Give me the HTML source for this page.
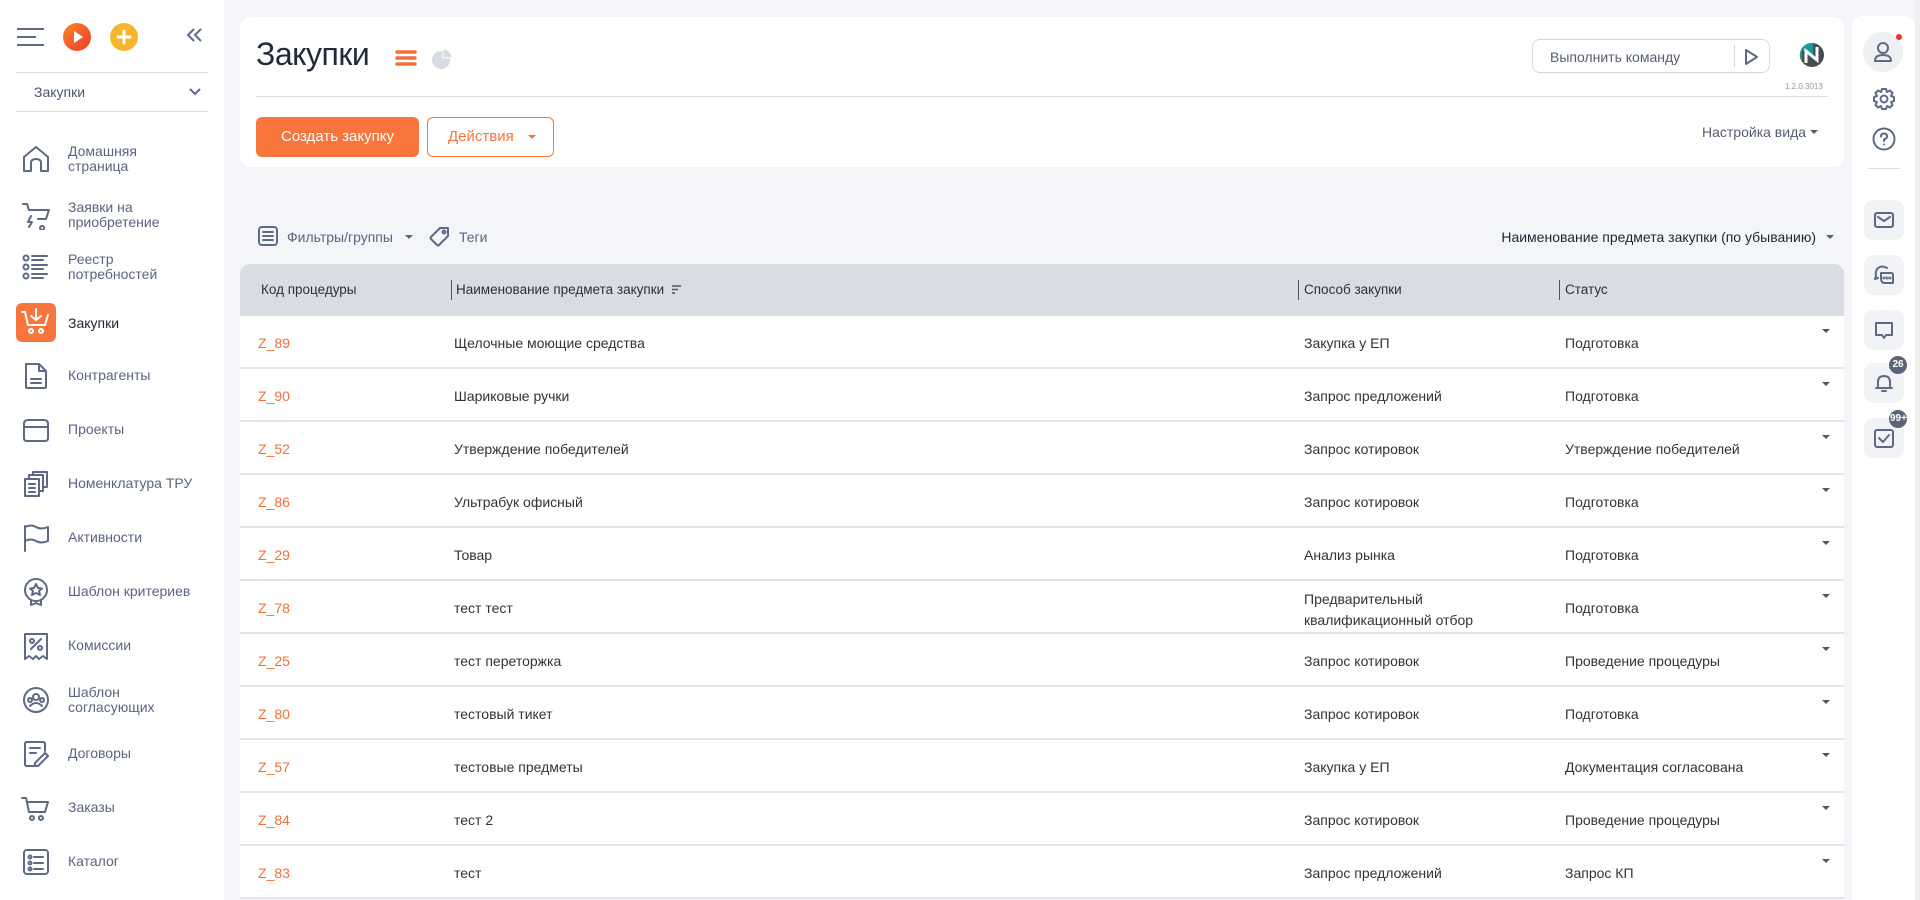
<!DOCTYPE html>
<html><head><meta charset="utf-8"><style>
*{box-sizing:border-box;margin:0;padding:0}
body{width:1920px;height:900px;overflow:hidden;background:#f4f5f9;font-family:"Liberation Sans","DejaVu Sans",sans-serif;position:relative;color:#333}
.abs{position:absolute}
#side{left:0;top:0;width:224px;height:900px;background:#fff}
.mi{position:absolute;left:0;width:224px;height:50px}
.mi svg{position:absolute;left:21px;top:10px}
.mi span{position:absolute;left:68px;font-size:14px;color:#5a6480;line-height:15px}
.ic{stroke:#5e6a85;stroke-width:2;fill:none;stroke-linecap:round;stroke-linejoin:round}
#card{left:240px;top:17px;width:1604px;height:150px;background:#fff;border-radius:10px}
.row{position:absolute;left:240px;width:1604px;height:53px;background:#fff;border-bottom:2px solid #e3e5ea;font-size:14px;color:#333}
.row div{position:absolute;top:19px}
.c1{left:18px;color:#f36f3a}.c2{left:214px}.c3{left:1064px}.c4{left:1325px}
.row .ar{left:1582px;top:13px;width:0;height:0;border-left:4px solid transparent;border-right:4px solid transparent;border-top:4px solid #555}
.rb{position:absolute;left:1864px;width:40px;height:40px;background:#f2f3f7;border-radius:10px}
.rb svg{position:absolute;left:10px;top:10px}
</style></head><body>
<div id="side" class="abs">
 <svg class="abs" style="left:16px;top:27px" width="30" height="20"><path d="M1 2H28M1 10H20M1 18H28" stroke="#5e6a85" stroke-width="2"/></svg>
 <svg class="abs" style="left:63px;top:23px" width="28" height="28"><defs><linearGradient id="g1" x1="0" y1="0" x2="1" y2="1"><stop offset="0" stop-color="#f9852a"/><stop offset="1" stop-color="#ef3b2c"/></linearGradient></defs><circle cx="14" cy="14" r="14" fill="url(#g1)"/><path d="M11 8L20 14L11 20Z" fill="#fff"/></svg>
 <svg class="abs" style="left:110px;top:23px" width="28" height="28"><circle cx="14" cy="14" r="14" fill="#f6b52d"/><path d="M14 8V20M8 14H20" stroke="#fff" stroke-width="3" stroke-linecap="round"/></svg>
 <svg class="abs" style="left:185px;top:27px" width="18" height="16"><path d="M9 2L3 8L9 14M16 2L10 8L16 14" stroke="#5e6a85" stroke-width="2" fill="none"/></svg>
 <div class="abs" style="left:16px;top:72px;width:192px;height:1px;background:#dcdde3"></div>
 <div class="abs" style="left:34px;top:84px;font-size:14px;color:#4a5470">Закупки</div>
 <svg class="abs" style="left:188px;top:87px" width="14" height="10"><path d="M2 2L7 7L12 2" stroke="#5e6a85" stroke-width="2" fill="none"/></svg>
 <div class="abs" style="left:16px;top:111px;width:192px;height:1px;background:#dcdde3"></div>

 <div class="mi" style="top:134px"><svg width="30" height="30" class="ic"><path d="M3 27V13L15 3L27 13V27H20V19Q20 15 15 15Q10 15 10 19V27Z"/></svg><span style="top:10px">Домашняя<br>страница</span></div>
 <div class="mi" style="top:190px"><svg width="30" height="30" class="ic"><path d="M2 4H6L8 10H28L25 19H17M10 16L7 22H11L8 27M21 26A2 2 0 1 0 21.1 26"/></svg><span style="top:10px">Заявки на<br>приобретение</span></div>
 <div class="mi" style="top:242px"><svg width="30" height="30" class="ic"><circle cx="5" cy="6" r="2.5"/><circle cx="5" cy="15" r="2.5"/><circle cx="5" cy="24" r="2.5"/><path d="M11 4H26M11 8H22M11 13H26M11 17H22M11 22H26M11 26H22"/></svg><span style="top:10px">Реестр<br>потребностей</span></div>
 <div class="abs" style="left:16px;top:303px;width:40px;height:39px;background:#f8763d;border-radius:6px"><svg width="40" height="39" style="position:absolute;left:0;top:0" stroke="#fff" stroke-width="2" fill="none" stroke-linecap="round"><path d="M6 9H9L12 22H29L32 12M20 6V17M15 13L20 17L25 13"/><circle cx="15" cy="28" r="2"/><circle cx="25" cy="28" r="2"/></svg></div>
 <div class="abs" style="left:68px;top:315px;font-size:14px;color:#1f2533">Закупки</div>
 <div class="mi" style="top:351px"><svg width="30" height="30" class="ic"><path d="M5 3H18L25 10V26Q25 27 24 27H6Q5 27 5 26ZM18 3V10H25M10 18H20M10 22H20"/></svg><span style="top:17px">Контрагенты</span></div>
 <div class="mi" style="top:405px"><svg width="30" height="30" class="ic"><path d="M3 9Q3 5 7 5H23Q27 5 27 9V23Q27 26 24 26H6Q3 26 3 23ZM3 12H27"/></svg><span style="top:17px">Проекты</span></div>
 <div class="mi" style="top:459px"><svg width="30" height="30" class="ic"><path d="M4 10H18V27H4ZM8 10V6H22V22H18M12 6V3H26V18H22M8 15H14M8 19H14M8 23H14"/></svg><span style="top:17px">Номенклатура ТРУ</span></div>
 <div class="mi" style="top:513px"><svg width="30" height="30" class="ic"><path d="M4 28V3M4 4Q10 1 15 4Q20 7 27 4V18Q20 21 15 18Q10 15 4 18"/></svg><span style="top:17px">Активности</span></div>
 <div class="mi" style="top:567px"><svg width="30" height="30" class="ic"><circle cx="15" cy="13" r="11"/><path d="M15 7L17 11L21 11.5L18 14L19 18L15 16L11 18L12 14L9 11.5L13 11Z M10 23V28L15 26L20 28V23"/></svg><span style="top:17px">Шаблон критериев</span></div>
 <div class="mi" style="top:621px"><svg width="30" height="30" class="ic"><path d="M4 3H26V28L22 25L18 28L15 25L12 28L8 25L4 28ZM10 18L20 8"/><circle cx="11" cy="10" r="2"/><circle cx="19" cy="17" r="2"/></svg><span style="top:17px">Комиссии</span></div>
 <div class="mi" style="top:675px"><svg width="30" height="30" class="ic"><circle cx="15" cy="15" r="12"/><circle cx="15" cy="12" r="3"/><path d="M9 21Q15 15 21 21M9 13A2 2 0 1 0 9.1 13M21 13A2 2 0 1 0 21.1 13"/></svg><span style="top:10px">Шаблон<br>согласующих</span></div>
 <div class="mi" style="top:729px"><svg width="30" height="30" class="ic"><path d="M24 12V5Q24 3 22 3H6Q4 3 4 5V25Q4 27 6 27H14M9 9H19M9 14H15M17 27L27 17L24 14L14 24V27Z"/></svg><span style="top:17px">Договоры</span></div>
 <div class="mi" style="top:783px"><svg width="30" height="30" class="ic"><path d="M1 5H5L8 19H24L27 9H6"/><circle cx="11" cy="25" r="2"/><circle cx="20" cy="25" r="2"/></svg><span style="top:17px">Заказы</span></div>
 <div class="mi" style="top:837px"><svg width="30" height="30" class="ic"><rect x="3" y="3" width="24" height="24" rx="3"/><circle cx="9" cy="10" r="1.5"/><circle cx="9" cy="16" r="1.5"/><circle cx="9" cy="22" r="1.5"/><path d="M13 10H22M13 16H22M13 22H22"/></svg><span style="top:17px">Каталог</span></div>
</div>

<div id="card" class="abs"></div>
<div class="abs" style="left:256px;top:36px;font-size:32px;color:#1f2a3a;letter-spacing:-0.5px">Закупки</div>
<svg class="abs" style="left:395px;top:49px" width="22" height="18"><path d="M2 3H20M2 9H20M2 15H20" stroke="#f36f3a" stroke-width="3.5" stroke-linecap="round"/></svg>
<svg class="abs" style="left:431px;top:48px" width="22" height="22"><circle cx="10" cy="12" r="9" fill="#d8dbe2"/><path d="M12 1A9 9 0 0 1 21 10H12Z" fill="#d8dbe2" stroke="#fff" stroke-width="1"/></svg>
<div class="abs" style="left:256px;top:96px;width:1572px;height:1px;background:#dcdde3"></div>
<div class="abs" style="left:256px;top:117px;width:163px;height:40px;background:#f8763d;border-radius:6px;color:#fff;font-size:15px;text-align:center;line-height:40px">Создать закупку</div>
<div class="abs" style="left:427px;top:117px;width:127px;height:40px;border:1.5px solid #f8763d;border-radius:6px;color:#f8763d;font-size:15px;line-height:37px;padding-left:20px">Действия<span style="position:absolute;left:100px;top:17px;border-left:4px solid transparent;border-right:4px solid transparent;border-top:4px solid #f8763d"></span></div>
<div class="abs" style="left:1532px;top:39px;width:238px;height:34px;border:1px solid #d6d8de;border-radius:8px;background:#fff"><span style="position:absolute;left:17px;top:9px;font-size:14px;color:#555d70">Выполнить команду</span><div style="position:absolute;left:201px;top:5px;width:1px;height:22px;background:#d6d8de"></div><svg style="position:absolute;left:210px;top:8px" width="16" height="18"><path d="M3 2L14 9L3 16Z" stroke="#5e6a85" stroke-width="2" fill="none" stroke-linejoin="round"/></svg></div>
<svg class="abs" style="left:1799px;top:42px" width="26" height="26"><circle cx="13" cy="13" r="12" fill="#474c55"/><path d="M13 1A12 12 0 0 0 3 20L3 8L14 17L14 1Z" fill="#1a9a98"/><path d="M7 21V9L18 18V5" stroke="#fff" stroke-width="3" fill="none"/></svg>
<div class="abs" style="left:1785px;top:82px;font-size:8px;color:#999">1.2.0.3013</div>
<div class="abs" style="left:1702px;top:124px;font-size:14px;color:#555d70">Настройка вида</div>
<div class="abs" style="left:1810px;top:130px;border-left:4px solid transparent;border-right:4px solid transparent;border-top:4px solid #555d70"></div>

<svg class="abs" style="left:257px;top:225px" width="22" height="22"><rect x="2" y="2" width="18" height="18" rx="3" class="ic"/><path d="M6 7H16M6 11H16M6 15H16" class="ic"/></svg>
<div class="abs" style="left:287px;top:229px;font-size:14px;color:#5a6480">Фильтры/группы</div>
<div class="abs" style="left:405px;top:235px;border-left:4px solid transparent;border-right:4px solid transparent;border-top:4px solid #5a6480"></div>
<svg class="abs" style="left:428px;top:225px" width="24" height="22"><path d="M3 12L12 3H20V11L11 20Q10 21 9 20L3 14Q2 13 3 12Z" class="ic"/><circle cx="16" cy="7" r="1.5" class="ic"/></svg>
<div class="abs" style="left:459px;top:229px;font-size:14px;color:#5a6480">Теги</div>
<div class="abs" style="right:104px;top:229px;font-size:14px;color:#1f2533;white-space:nowrap">Наименование предмета закупки (по убыванию)</div>
<div class="abs" style="left:1826px;top:235px;border-left:4px solid transparent;border-right:4px solid transparent;border-top:4px solid #555d70"></div>

<div class="abs" style="left:240px;top:264px;width:1604px;height:52px;background:#d9dce3;border-radius:10px 10px 0 0;font-size:13.5px;color:#2a303c">
 <span style="position:absolute;left:21px;top:18px">Код процедуры</span>
 <div style="position:absolute;left:211px;top:16px;width:1px;height:20px;background:#555"></div>
 <span style="position:absolute;left:216px;top:18px">Наименование предмета закупки</span>
 <svg style="position:absolute;left:432px;top:21px" width="10" height="10"><path d="M0 1H9M0 4.5H6M0 8H3" stroke="#555" stroke-width="1.5"/></svg>
 <div style="position:absolute;left:1058px;top:16px;width:1px;height:20px;background:#555"></div>
 <span style="position:absolute;left:1064px;top:18px">Способ закупки</span>
 <div style="position:absolute;left:1319px;top:16px;width:1px;height:20px;background:#555"></div>
 <span style="position:absolute;left:1325px;top:18px">Статус</span>
</div>

<div class="row" style="top:316px"><div class="c1">Z_89</div><div class="c2">Щелочные моющие средства</div><div class="c3">Закупка у ЕП</div><div class="c4">Подготовка</div><div class="ar"></div></div>
<div class="row" style="top:369px"><div class="c1">Z_90</div><div class="c2">Шариковые ручки</div><div class="c3">Запрос предложений</div><div class="c4">Подготовка</div><div class="ar"></div></div>
<div class="row" style="top:422px"><div class="c1">Z_52</div><div class="c2">Утверждение победителей</div><div class="c3">Запрос котировок</div><div class="c4">Утверждение победителей</div><div class="ar"></div></div>
<div class="row" style="top:475px"><div class="c1">Z_86</div><div class="c2">Ультрабук офисный</div><div class="c3">Запрос котировок</div><div class="c4">Подготовка</div><div class="ar"></div></div>
<div class="row" style="top:528px"><div class="c1">Z_29</div><div class="c2">Товар</div><div class="c3">Анализ рынка</div><div class="c4">Подготовка</div><div class="ar"></div></div>
<div class="row" style="top:581px"><div class="c1">Z_78</div><div class="c2">тест тест</div><div class="c3" style="top:8px;line-height:21px">Предварительный<br>квалификационный отбор</div><div class="c4">Подготовка</div><div class="ar"></div></div>
<div class="row" style="top:634px"><div class="c1">Z_25</div><div class="c2">тест переторжка</div><div class="c3">Запрос котировок</div><div class="c4">Проведение процедуры</div><div class="ar"></div></div>
<div class="row" style="top:687px"><div class="c1">Z_80</div><div class="c2">тестовый тикет</div><div class="c3">Запрос котировок</div><div class="c4">Подготовка</div><div class="ar"></div></div>
<div class="row" style="top:740px"><div class="c1">Z_57</div><div class="c2">тестовые предметы</div><div class="c3">Закупка у ЕП</div><div class="c4">Документация согласована</div><div class="ar"></div></div>
<div class="row" style="top:793px"><div class="c1">Z_84</div><div class="c2">тест 2</div><div class="c3">Запрос котировок</div><div class="c4">Проведение процедуры</div><div class="ar"></div></div>
<div class="row" style="top:846px"><div class="c1">Z_83</div><div class="c2">тест</div><div class="c3">Запрос предложений</div><div class="c4">Запрос КП</div><div class="ar"></div></div>

<div class="abs" style="left:1852px;top:16px;width:63px;height:884px;background:#fff;border-radius:10px 10px 0 0"></div>
<div class="abs" style="left:1863px;top:32px;width:40px;height:40px;border-radius:50%;background:#eef0f4"><svg style="position:absolute;left:10px;top:9px" width="20" height="22" class="ic"><circle cx="10" cy="7" r="5"/><path d="M2 20Q2 14 10 14Q18 14 18 20Z"/></svg></div>
<div class="abs" style="left:1896px;top:34px;width:6px;height:6px;border-radius:50%;background:#f0302a"></div>
<svg class="abs" style="left:1872px;top:87px" width="24" height="24"><circle cx="12" cy="12" r="3.5" class="ic"/><path class="ic" d="M10 2H14L15 5L18 3.5L20.5 6L19 9L22 10V14L19 15L20.5 18L18 20.5L15 19L14 22H10L9 19L6 20.5L3.5 18L5 15L2 14V10L5 9L3.5 6L6 3.5L9 5Z"/></svg>
<svg class="abs" style="left:1872px;top:127px" width="24" height="24"><circle cx="12" cy="12" r="10.5" class="ic"/><path class="ic" d="M9 9.5Q9 6.5 12 6.5Q15 6.5 15 9.5Q15 11.5 12 12.5V14"/><circle cx="12" cy="17.5" r="1" fill="#5e6a85"/></svg>
<div class="abs" style="left:1868px;top:168px;width:32px;height:1px;background:#dcdde3"></div>
<div class="rb" style="top:200px"><svg width="20" height="20" class="ic"><rect x="1" y="3" width="18" height="14" rx="2"/><path d="M4 7L10 11L16 7"/></svg></div>
<div class="rb" style="top:255px"><svg width="20" height="20" class="ic"><path d="M13 3Q8 0 4 3Q1 6 2 11L1 14L4 13M7 8H17Q19 8 19 10V18H11Q7 18 7 14Z"/><circle cx="10" cy="13" r=".5"/><circle cx="13" cy="13" r=".5"/><circle cx="16" cy="13" r=".5"/></svg></div>
<div class="rb" style="top:310px"><svg width="20" height="20" class="ic"><path d="M2 3H18V15H12L10 18L8 15H2Z"/></svg></div>
<div class="rb" style="top:363px"><svg width="20" height="20" class="ic"><path d="M4 15V9Q4 3 10 3Q16 3 16 9V15H2H18M8 18H12"/></svg></div>
<div class="abs" style="left:1889px;top:356px;width:18px;height:18px;border-radius:50%;background:#5b6478;color:#fff;font-size:10px;text-align:center;line-height:18px;font-weight:bold">26</div>
<div class="rb" style="top:418px"><svg width="20" height="20" class="ic"><rect x="1" y="2" width="18" height="17" rx="2"/><path d="M5 10L9 14L15 7"/></svg></div>
<div class="abs" style="left:1889px;top:410px;width:18px;height:18px;border-radius:50%;background:#5b6478;color:#fff;font-size:10px;line-height:18px;font-weight:bold;overflow:hidden;padding-left:1px">99+</div>
<div class="abs" style="left:1915px;top:0;width:5px;height:900px;background:#f0f0f0"></div>
</body></html>
